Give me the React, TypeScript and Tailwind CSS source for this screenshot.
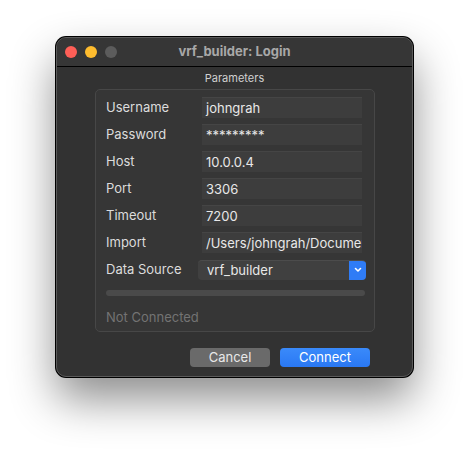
import React from 'react';

const fields: { label: string; value: string }[] = [
  { label: 'Username', value: 'johngrah' },
  { label: 'Password', value: '*********' },
  { label: 'Host', value: '10.0.0.4' },
  { label: 'Port', value: '3306' },
  { label: 'Timeout', value: '7200' },
  { label: 'Import', value: '/Users/johngrah/Documents/vrf_builder/import' },
];

const Field: React.FC<{ label: string; value: string }> = ({ label, value }) => (
  <div className="flex items-center h-[27px]">
    <div className="w-[96px] text-[13px] text-[#dcdcdc]">{label}</div>
    <div className="w-[160px] h-[21px] bg-[#3d3d3d] border-t border-[#454545] px-[4px] text-[13px] text-[#e8e8e8] leading-[20px] overflow-hidden whitespace-nowrap">
      {value}
    </div>
  </div>
);

export default function App() {
  return (
    <div
      className="w-[469px] h-[451px] bg-white pt-[37px] pl-[56px]"
      style={{ fontFamily: 'Inter, "Noto Sans", sans-serif' }}
    >
      <div className="w-[357px] h-[340px] rounded-[10px] bg-[#323232] border border-[#5a5a5a] shadow-[0_0_0_1px_#000,0_22px_45px_rgba(0,0,0,0.45)] overflow-hidden flex flex-col">
        {/* title bar */}
        <div className="relative h-[29px] flex items-center justify-center border-b border-black bg-[#363636]">
          <div className="absolute left-[8px] top-[8px] flex gap-[8px]">
            <div className="w-[12px] h-[12px] rounded-full bg-[#fe5f57]" />
            <div className="w-[12px] h-[12px] rounded-full bg-[#febc2e]" />
            <div className="w-[12px] h-[12px] rounded-full bg-[#5c5c5c]" />
          </div>
          <span className="text-[13px] font-bold text-[#a8a8a8]">vrf_builder: Login</span>
        </div>

        <div className="text-center text-[11px] text-[#d0d0d0] mt-[4px] leading-[14px]">Parameters</div>

        {/* parameters group */}
        <div className="ml-[38px] mt-[4px] w-[280px] h-[243px] rounded-[5px] border border-[#474747] bg-[#363636] pl-[10px] pt-[4px]">
          {fields.map((f) => (
            <Field key={f.label} label={f.label} value={f.value} />
          ))}
          <div className="flex items-center h-[27px]">
            <div className="w-[92px] text-[13px] text-[#dcdcdc]">Data Source</div>
            <div className="w-[168px] h-[20px] flex rounded-[4px] overflow-hidden bg-[#404040] border-t border-[#4c4c4c]">
              <div className="flex-1 px-[9px] text-[13px] text-[#e8e8e8] leading-[19px]">vrf_builder</div>
              <div className="w-[17px] h-full bg-[#2f7cf6] flex items-center justify-center">
                <svg width="8" height="6" viewBox="0 0 8 6">
                  <path d="M1.5 1.5 L4 4 L6.5 1.5" stroke="#fff" strokeWidth="1.6" fill="none" strokeLinecap="round" strokeLinejoin="round" />
                </svg>
              </div>
            </div>
          </div>
          <div className="mt-[7px] w-[259px] h-[6px] rounded-full bg-[#4a4a4a]" />
          <div className="mt-[12px] text-[13px] text-[#737373]">Not Connected</div>
        </div>

        {/* buttons */}
        <div className="flex justify-end gap-[10px] mt-[16px] pr-[42px]">
          <button className="w-[80px] h-[19px] rounded-[4px] bg-[#6a6a6a] text-[13px] text-[#e8e8e8] leading-[19px]">
            Cancel
          </button>
          <button className="w-[90px] h-[19px] rounded-[4px] bg-gradient-to-b from-[#3a8afa] to-[#2a78f4] text-[13px] text-white leading-[19px]">
            Connect
          </button>
        </div>
      </div>
    </div>
  );
}
